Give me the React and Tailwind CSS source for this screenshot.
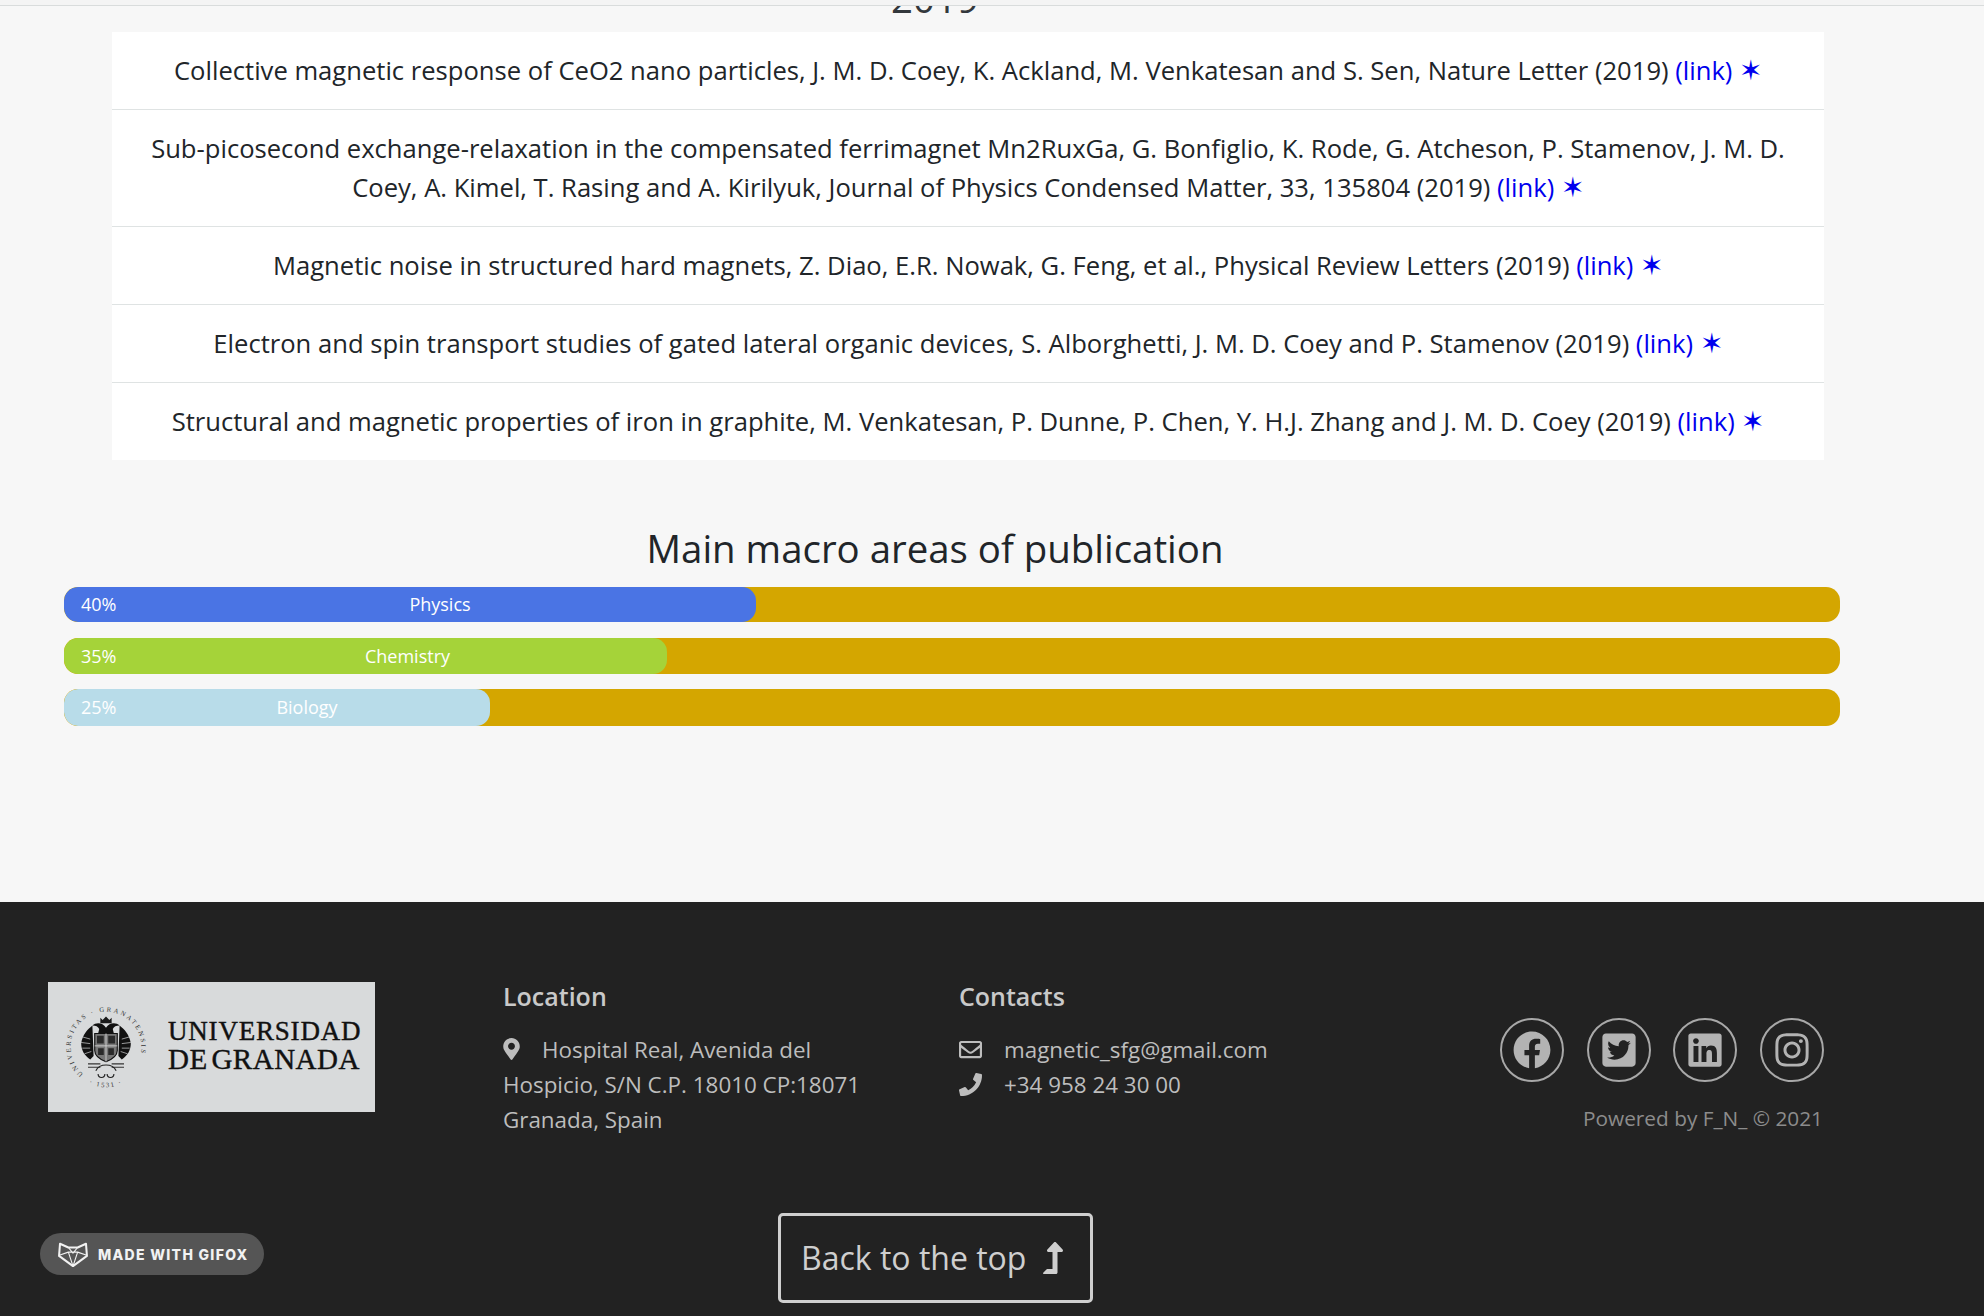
import React from 'react';
import { FaFacebook, FaTwitterSquare, FaLinkedin, FaInstagram, FaMapMarkerAlt, FaRegEnvelope, FaPhoneAlt, FaLevelUpAlt } from 'react-icons/fa';

const papers = [
  ['Collective magnetic response of CeO2 nano particles, J. M. D. Coey, K. Ackland, M. Venkatesan and S. Sen, Nature Letter (2019)'],
  ['Sub-picosecond exchange-relaxation in the compensated ferrimagnet Mn2RuxGa, G. Bonfiglio, K. Rode, G. Atcheson, P. Stamenov, J. M. D. Coey, A. Kimel, T. Rasing and A. Kirilyuk, Journal of Physics Condensed Matter, 33, 135804 (2019)'],
  ['Magnetic noise in structured hard magnets, Z. Diao, E.R. Nowak, G. Feng, et al., Physical Review Letters (2019)'],
  ['Electron and spin transport studies of gated lateral organic devices, S. Alborghetti, J. M. D. Coey and P. Stamenov (2019)'],
  ['Structural and magnetic properties of iron in graphite, M. Venkatesan, P. Dunne, P. Chen, Y. H.J. Zhang and J. M. D. Coey (2019)'],
];

const bars = [
  { pct: '40%', label: 'Physics', fill: 'w-[692px] bg-[#4a74e4]', labelBox: 'pl-[8px]', mb: 'mb-[16px]', h: 'h-[35px]' },
  { pct: '35%', label: 'Chemistry', fill: 'w-[603px] bg-[#a5d339]', labelBox: 'pl-[32px]', mb: 'mb-[15px]', h: 'h-[36px]' },
  { pct: '25%', label: 'Biology', fill: 'w-[426px] bg-[#b8dce9]', labelBox: 'pl-[8px]', mb: 'mb-0', h: 'h-[37px]' },
];

const Seal = () => (
  <svg viewBox="0 0 90 90" className="w-[86px] h-[86px] shrink-0">
    <defs>
      <path id="sealTop" d="M 21.2 73.3 A 37 37 0 1 1 68.8 73.3" />
      <path id="sealBottom" d="M 24 81.4 A 42 42 0 0 0 66 81.4" />
    </defs>
    <text fontSize="7" fill="#333" letterSpacing="2.3" fontFamily="'Liberation Serif', serif">
      <textPath href="#sealTop">UNIVERSITAS · GRANATENSIS</textPath>
    </text>
    <text fontSize="7" fill="#333" letterSpacing="1.8" textAnchor="middle" fontFamily="'Liberation Serif', serif">
      <textPath href="#sealBottom" startOffset="50%">· 1531 ·</textPath>
    </text>
    <g transform="translate(45 45) scale(1.18) translate(-45 -45)">
      {/* crown */}
      <path d="M40 19l2 2 3-3 3 3 2-2 0 5h-10z" fill="#1a1a1a" />
      {/* eagle */}
      <path d="M45 28c-3-5-9-5-12-2 3 0 5 1 6 3l-1 4h14l-1-4c1-2 3-3 6-3-3-3-9-3-12 2z" fill="#111" />
      <path d="M33 26c-4 3-9 8-10 16 0 6 3 11 8 14l3-3-1-25z" fill="#111" />
      <path d="M57 26c4 3 9 8 10 16 0 6-3 11-8 14l-3-3 1-25z" fill="#111" />
      <path d="M24 36l7 2M23 41l8 1M24 46l7 0M26 51l6-2M66 36l-7 2M67 41l-8 1M66 46l-7 0M64 51l-6-2" stroke="#d8dadb" strokeWidth=".6" />
      {/* shield */}
      <path d="M35 33h20v15c0 5-5 8-10 10-5-2-10-5-10-10z" fill="#777" stroke="#111" strokeWidth="1" />
      <path d="M45 33v25M35 44h20" stroke="#ddd" strokeWidth=".7" />
      <path d="M37 35h6v7h-6zM47 35h6v7h-6zM38 46h5v6h-5zM47 46h5v6h-5z" fill="#2a2a2a" />
      {/* feet */}
      <path d="M29 60h11M29 63h11M50 60h11M50 63h11" stroke="#333" strokeWidth="1" />
      <path d="M36 66c2-4 5-5 9-5s7 1 9 5M38 69a3 3 0 1 0 6 0M46 69a3 3 0 1 0 6 0" stroke="#222" strokeWidth="1" fill="none" />
    </g>
  </svg>
);

const FoxMark = () => (
  <svg viewBox="0 0 32 28" className="w-[30px] h-[26px] shrink-0" fill="none" stroke="#f2f2f2" strokeWidth="2.2" strokeLinejoin="round">
    <path d="M2 3l9 4h10l9-4 1 13-15 11L1 16z" />
    <path d="M11 7l5 6 5-6M2 15l9-3 5 15 5-15 9 3M11 12h10" strokeWidth="1.2" />
  </svg>
);

export default function App() {
  return (
    <div className="w-full h-[1316px] overflow-hidden flex flex-col bg-[#f7f7f7] font-['Open_Sans',sans-serif] text-[#212529]">
      <div className="h-[6px] shrink-0 bg-[#f4f4f4] border-b border-[#d9dcdc] relative z-10" />

      <div className="h-[26px] overflow-hidden flex justify-center pr-[114px]">
        <h2 className="text-[38.4px] leading-[38px] -mt-[27px] text-[#33383c]">2019</h2>
      </div>

      <ul className="ml-[112px] w-[1712px] bg-white text-[25.6px] leading-[39px] text-center">
        {papers.map(([text], i) => (
          <li key={i} className={`px-[28px] py-[19px] ${i > 0 ? 'border-t border-[#dfe3e3]' : ''}`}>
            {text} <a className="text-[#0000ee]">(link)</a> <span className="text-[#0000ee] text-[28px] leading-none">✶</span>
          </li>
        ))}
      </ul>

      <h2 className="mt-[63px] pr-[114px] text-center text-[38.4px] leading-[50px] text-[#212529]">Main macro areas of publication</h2>

      <div className="mt-[14px] ml-[64px] w-[1776px] shrink-0">
        {bars.map((b) => (
          <div key={b.label} className={`${b.h} ${b.mb} rounded-[14px] bg-[#d4a600] overflow-hidden flex`}>
            <div className={`${b.fill} rounded-[14px] flex items-center pl-[17px] text-white text-[18px] font-medium`}>
              <span className="w-[35px] shrink-0">{b.pct}</span>
              <span className={`flex-1 text-center ${b.labelBox}`}>{b.label}</span>
            </div>
          </div>
        ))}
      </div>

      <footer className="mt-[176px] flex-1 bg-[#222222] text-[#bdbdbd] pt-[80px]">
        <div className="flex items-start pl-[48px] pr-[160px]">
          <div className="w-[455px] shrink-0">
            <div className="w-[327px] h-[130px] bg-[#d8dadb] flex items-center pl-[15px] gap-[19px] font-['Liberation_Serif',serif] text-[#111111]">
              <Seal />
              <div className="flex flex-col pb-[3px] [-webkit-text-stroke:0.4px_#111111]">
                <span className="text-[27px] leading-[31px] tracking-[0.8px]">UNIVERSIDAD</span>
                <span className="text-[29px] leading-[32px] -mt-[4px] tracking-[0.5px] [word-spacing:-4px]">DE GRANADA</span>
              </div>
            </div>
          </div>

          <div className="w-[456px] shrink-0">
            <h3 className="text-[25px] leading-[28px] font-semibold text-[#c9c9c9]">Location</h3>
            <p className="mt-[22px] w-[370px] text-[22.4px] leading-[35px]">
              <FaMapMarkerAlt className="inline-block w-[17px] h-[22px] mr-[22px] -mt-[6px]" />
              Hospital Real, Avenida del Hospicio, S/N C.P. 18010 CP:18071 Granada, Spain
            </p>
          </div>

          <div className="flex-1">
            <h3 className="text-[25px] leading-[28px] font-semibold text-[#c9c9c9]">Contacts</h3>
            <div className="mt-[22px] text-[22.4px] leading-[35px]">
              <div className="flex items-center gap-[22px]">
                <FaRegEnvelope className="w-[23px] h-[23px]" />
                <span>magnetic_sfg@gmail.com</span>
              </div>
              <div className="flex items-center gap-[22px]">
                <FaPhoneAlt className="w-[23px] h-[23px] scale-x-[-1]" />
                <span>+34 958 24 30 00</span>
              </div>
            </div>
          </div>

          <div className="flex flex-col items-end pt-[36px]">
            <div className="flex gap-[22.7px]">
              {[FaFacebook, FaTwitterSquare, FaLinkedin, FaInstagram].map((Icon, i) => (
                <span key={i} className="w-[64px] h-[64px] rounded-full border-2 border-[#a8a8a8] flex items-center justify-center">
                  <Icon className="w-[38px] h-[38px] text-[#b3b3b3]" />
                </span>
              ))}
            </div>
            <p className="mt-[20px] pr-[1px] text-[20.8px] leading-[32px] text-[#8c8c8c]">Powered by F_N_ © 2021</p>
          </div>
        </div>

        <div className="flex items-start pl-[40px] mt-[76px]">
          <div className="mt-[20px] w-[224px] h-[42px] rounded-full bg-[#555555] flex items-center gap-[10px] pl-[18px] font-['Inter',sans-serif] font-extrabold text-[14px] tracking-[1.3px] text-[#f2f2f2] whitespace-nowrap">
            <FoxMark />
            <span>MADE WITH GIFOX</span>
          </div>
          <button className="ml-[514px] w-[315px] h-[90px] border-[3px] border-[#cfcfcf] rounded-[5px] flex items-center pl-[20px] gap-[14px] text-[32px] text-[#cfcfcf]">
            <span>Back to the top</span>
            <FaLevelUpAlt className="w-[26px] h-[32px]" />
          </button>
        </div>
      </footer>
    </div>
  );
}
